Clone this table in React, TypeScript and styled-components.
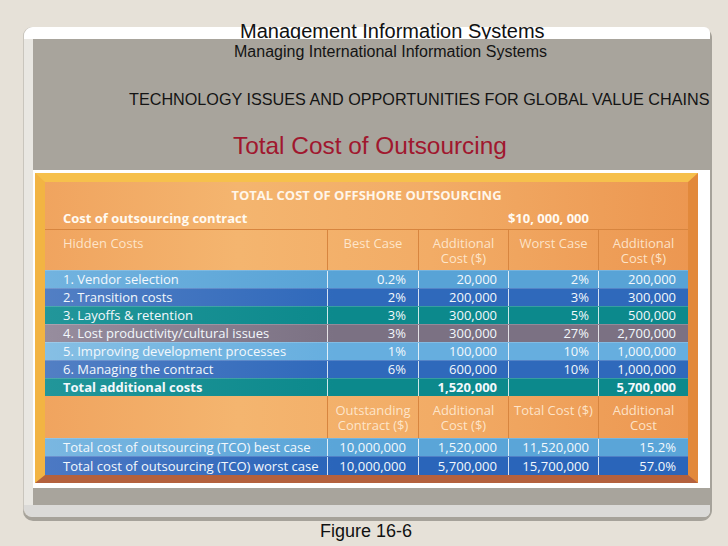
import React from "react";
import styled, { createGlobalStyle } from "styled-components";

const Global = createGlobalStyle`
  html, body { margin: 0; padding: 0; background: #e6e1d8; }
  body {
    width: 728px; height: 546px; overflow: hidden;
    font-family: "Liberation Sans", Arial, sans-serif;
  }
`;

const Page = styled.div`
  width: 728px;
  height: 546px;
  padding-top: 27px;
  box-sizing: border-box;
`;

const Frame = styled.div`
  margin-left: 23px;
  width: 689px;
  height: 494px;
  box-sizing: border-box;
  background: #a6a29a;
  border-radius: 10px 11px 11px 10px;
  padding: 0 12px 4px 0;
  display: flex;
`;

const Sheet = styled.div`
  flex: 1;
  display: flex;
  flex-direction: column;
  background: #e9e7e2;
  border-left: 1px solid #c9c5bd;
  border-radius: 9px 6px 6px 9px;
`;

const TopStrip = styled.div`
  height: 12px;
  flex: none;
  background: #ffffff;
  border-radius: 9px 6px 0 0;
  display: flex;
  align-items: flex-start;
  padding-left: 216px;
`;

const MainTitle = styled.div`
  font-size: 20px;
  line-height: 8px;
  color: #111;
  white-space: nowrap;
`;

const Body = styled.div`
  flex: 1;
  display: flex;
  flex-direction: column;
  padding-left: 9px;
`;

const GrayHeader = styled.div`
  height: 131px;
  flex: none;
  background: #a8a49c;
  display: flex;
  flex-direction: column;
  padding-top: 4px;
  box-sizing: border-box;
`;

const SubTitle = styled.div<{ $left: number; $top?: number; $size: number }>`
  font-size: ${(p) => p.$size}px;
  line-height: 18px;
  color: #141414;
  white-space: nowrap;
  padding-left: ${(p) => p.$left}px;
  margin-top: ${(p) => p.$top ?? 0}px;
`;

const SlideTitle = styled.div`
  font-size: 24.4px;
  line-height: 28px;
  color: #a0172e;
  white-space: nowrap;
  padding-left: 200px;
  margin-top: 24px;
`;

const WhitePanel = styled.div`
  height: 318px;
  flex: none;
  background: #ffffff;
  padding: 3px 2px 5px 2px;
  box-sizing: border-box;
`;

const GrayBand = styled.div`
  flex: 1;
  background: #a8a49c;
`;

const BottomStrip = styled.div`
  height: 12px;
  flex: none;
  background: #dbdad8;
  border-radius: 0 0 6px 9px;
`;

const Caption = styled.div`
  font-size: 18px;
  line-height: 20px;
  color: #111;
  padding-left: 320px;
`;

/* ---------- table image ---------- */

const TableFrame = styled.div`
  width: 663px;
  height: 310px;
  box-sizing: border-box;
  border-style: solid;
  border-width: 9px 10px 8px 10px;
  border-color: #f6c04c #e2893b #b4613d #f2b443;
  background: linear-gradient(90deg, #f0a45f 0%, #f4b56f 30%, #f2ac66 60%, #ec9751 100%);
  font-family: "Open Sans", "Noto Sans", sans-serif;
  display: flex;
  flex-direction: column;
`;

const cols = "282px 91px 90px 90px 90px";

const TitleRow = styled.div`
  height: 25px;
  display: flex;
  align-items: center;
  justify-content: center;
  font-weight: 700;
  font-size: 13px;
  color: #fff6ea;
  padding-top: 1px;
  box-sizing: border-box;
`;

const ContractRow = styled.div`
  height: 22px;
  display: grid;
  grid-template-columns: 282px 271px 90px;
  align-items: center;
  font-weight: 700;
  font-size: 13px;
  color: #fffaf2;
`;

const ContractLabel = styled.div`
  padding-left: 18px;
`;

const ContractValue = styled.div`
  text-align: right;
  padding-right: 9px;
`;

const HeaderRow = styled.div<{ $h: number; $topLine?: boolean; $padTop: number }>`
  height: ${(p) => p.$h}px;
  display: grid;
  grid-template-columns: ${cols};
  border-top: ${(p) => (p.$topLine ? "1px solid #d7853f" : "none")};
  box-sizing: border-box;
  & > div {
    padding-top: ${(p) => p.$padTop}px;
  }
`;

const HeadCell = styled.div<{ $first?: boolean }>`
  border-left: ${(p) => (p.$first ? "none" : "1px solid #d7853f")};
  color: rgba(255, 238, 218, 0.88);
  font-size: 13px;
  line-height: 14.5px;
  white-space: nowrap;
  text-align: ${(p) => (p.$first ? "left" : "center")};
  padding-left: ${(p) => (p.$first ? 18 : 0)}px;
`;

type Tone = { left: string; base: string };

const tones: Record<string, Tone> = {
  light: { left: "#72b3df", base: "#58a3d6" },
  blue: { left: "#527fc4", base: "#2f69bb" },
  teal: { left: "#22969a", base: "#0c898c" },
  mauve: { left: "#978d9e", base: "#7b7183" },
  pale: { left: "#86bfe4", base: "#66aedf" },
  tcoLight: { left: "#7ab7e1", base: "#5aa5d8" },
  tcoBlue: { left: "#4c79c4", base: "#2a65ba" },
};

const DataRow = styled.div<{ $tone: Tone; $h: number; $size: number; $bold?: boolean }>`
  height: ${(p) => p.$h}px;
  display: grid;
  grid-template-columns: ${cols};
  background: linear-gradient(90deg, ${(p) => p.$tone.left} 0%, ${(p) => p.$tone.base} 45%);
  color: #f3f8fc;
  font-size: ${(p) => p.$size}px;
  font-weight: ${(p) => (p.$bold ? 700 : 400)};
  line-height: ${(p) => p.$h - 1}px;
  white-space: nowrap;
  border-top: 1px solid rgba(255, 255, 255, 0.18);
  box-sizing: border-box;
`;

const LabelCell = styled.div`
  padding-left: 18px;
`;

const NumCell = styled.div<{ $pad: number }>`
  border-left: 1px solid rgba(255, 255, 255, 0.8);
  text-align: right;
  padding-right: ${(p) => p.$pad}px;
`;

const pads = [12, 11, 9, 12];

const rows: { label: string; tone: string; v: string[]; bold?: boolean }[] = [
  { label: "1. Vendor selection", tone: "light", v: ["0.2%", "20,000", "2%", "200,000"] },
  { label: "2. Transition costs", tone: "blue", v: ["2%", "200,000", "3%", "300,000"] },
  { label: "3. Layoffs & retention", tone: "teal", v: ["3%", "300,000", "5%", "500,000"] },
  { label: "4. Lost productivity/cultural issues", tone: "mauve", v: ["3%", "300,000", "27%", "2,700,000"] },
  { label: "5. Improving development processes", tone: "pale", v: ["1%", "100,000", "10%", "1,000,000"] },
  { label: "6. Managing the contract", tone: "blue", v: ["6%", "600,000", "10%", "1,000,000"] },
  { label: "Total additional costs", tone: "teal", v: ["", "1,520,000", "", "5,700,000"], bold: true },
];

const tco = [
  { label: "Total cost of outsourcing (TCO) best case", tone: "tcoLight", h: 18, v: ["10,000,000", "1,520,000", "11,520,000", "15.2%"] },
  { label: "Total cost of outsourcing (TCO) worst case", tone: "tcoBlue", h: 19, v: ["10,000,000", "5,700,000", "15,700,000", "57.0%"] },
];

const Lines = ({ text }: { text: string }) => (
  <>
    {text.split("|").map((t, i) => (
      <div key={i}>{t}</div>
    ))}
  </>
);

export default function App() {
  return (
    <>
      <Global />
      <Page>
        <Frame>
          <Sheet>
            <TopStrip>
              <MainTitle>Management Information Systems</MainTitle>
            </TopStrip>
            <Body>
              <GrayHeader>
                <SubTitle $left={201} $size={16}>Managing International Information Systems</SubTitle>
                <SubTitle $left={96} $top={29} $size={16.2}>
                  TECHNOLOGY ISSUES AND OPPORTUNITIES FOR GLOBAL VALUE CHAINS
                </SubTitle>
                <SlideTitle>Total Cost of Outsourcing</SlideTitle>
              </GrayHeader>
              <WhitePanel>
                <TableFrame>
                  <TitleRow>TOTAL COST OF OFFSHORE OUTSOURCING</TitleRow>
                  <ContractRow>
                    <ContractLabel>Cost of outsourcing contract</ContractLabel>
                    <ContractValue>$10, 000, 000</ContractValue>
                  </ContractRow>
                  <HeaderRow $h={41} $topLine $padTop={6}>
                    <HeadCell $first>Hidden Costs</HeadCell>
                    <HeadCell>Best Case</HeadCell>
                    <HeadCell><Lines text="Additional|Cost ($)" /></HeadCell>
                    <HeadCell>Worst Case</HeadCell>
                    <HeadCell><Lines text="Additional|Cost ($)" /></HeadCell>
                  </HeaderRow>
                  {rows.map((r) => (
                    <DataRow key={r.label} $tone={tones[r.tone]} $h={18} $size={13} $bold={r.bold}>
                      <LabelCell>{r.label}</LabelCell>
                      {r.v.map((v, i) => (
                        <NumCell key={i} $pad={pads[i]}>{v}</NumCell>
                      ))}
                    </DataRow>
                  ))}
                  <HeaderRow $h={42} $padTop={7}>
                    <HeadCell $first />
                    <HeadCell><Lines text="Outstanding|Contract ($)" /></HeadCell>
                    <HeadCell><Lines text="Additional|Cost ($)" /></HeadCell>
                    <HeadCell>Total Cost ($)</HeadCell>
                    <HeadCell><Lines text="Additional|Cost" /></HeadCell>
                  </HeaderRow>
                  {tco.map((r) => (
                    <DataRow key={r.label} $tone={tones[r.tone]} $h={r.h} $size={13.1}>
                      <LabelCell>{r.label}</LabelCell>
                      {r.v.map((v, i) => (
                        <NumCell key={i} $pad={pads[i]}>{v}</NumCell>
                      ))}
                    </DataRow>
                  ))}
                </TableFrame>
              </WhitePanel>
              <GrayBand />
            </Body>
            <BottomStrip />
          </Sheet>
        </Frame>
        <Caption>Figure 16-6</Caption>
      </Page>
    </>
  );
}
